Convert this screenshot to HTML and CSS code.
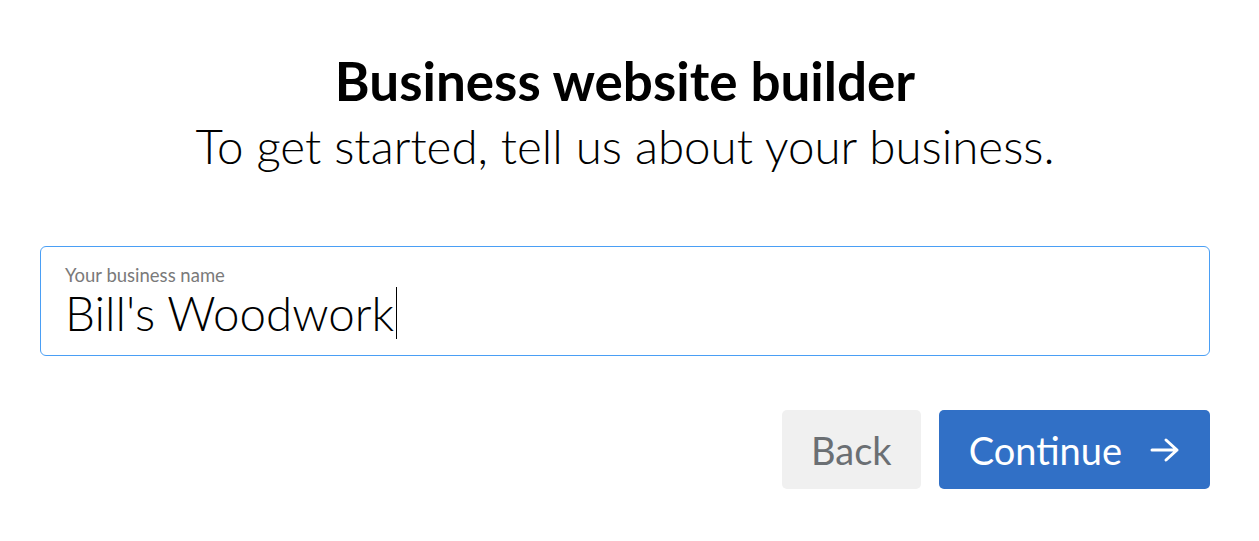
FILE: index.html
```html
<!DOCTYPE html>
<html lang="en">
<head>
    <meta charset="UTF-8">
    <meta name="viewport" content="width=device-width, initial-scale=1.0">
    <title>Business website builder</title>
    <link rel="stylesheet" href="styles.css">
</head>
<body>
    <div class="wizard">
        <h1>Business website builder</h1>
        <p class="lead">To get started, tell us about your business.</p>

        <div class="field">
            <label for="businessName">Your business name</label>
            <div class="value"><span id="businessName">Bill's Woodwork</span><span class="caret"></span></div>
        </div>

        <div class="actions">
            <button class="btn btn-back">Back</button>
            <button class="btn btn-continue">Continue
                <svg class="arrow" width="30" height="26" viewBox="0 0 30 26">
                    <path d="M2 13 H27 M16 3 L27 13 L16 23" fill="none" stroke="#fff" stroke-width="3" stroke-linecap="round" stroke-linejoin="round"/>
                </svg>
            </button>
        </div>
    </div>
</body>
</html>
```

FILE: styles.css
```css
/* General Styles */
body {
    margin: 0;
    font-family: 'Lato', 'Noto Sans', sans-serif;
    background: #fff;
    color: #000;
}
.wizard {
    padding: 48px 49px 0 40px;
}
h1 {
    margin: 0;
    text-align: center;
    font-size: 53px;
    font-weight: 700;
    line-height: 66px;
}
.lead {
    margin: 0;
    text-align: center;
    font-size: 47.5px;
    font-weight: 300;
    line-height: 64px;
}

/* Input field */
.field {
    margin-top: 68px;
    height: 110px;
    border: 1px solid #4a9ff5;
    border-radius: 6px;
    padding: 0 24px;
    box-sizing: border-box;
}
.field label {
    display: block;
    margin-top: 17px;
    font-size: 18.5px;
    font-weight: 400;
    color: #7a7a7a;
    line-height: 22px;
}
.value {
    display: flex;
    align-items: center;
    font-size: 47.5px;
    font-weight: 300;
    line-height: 54px;
}
.caret {
    display: inline-block;
    width: 1px;
    height: 52px;
    margin-left: 2px;
    background: #000;
}

/* Buttons */
.actions {
    display: flex;
    justify-content: flex-end;
    gap: 18px;
    margin-top: 54px;
}
.btn {
    height: 79px;
    border: none;
    border-radius: 5px;
    font-family: inherit;
    font-size: 38px;
    font-weight: 400;
    display: flex;
    align-items: center;
    cursor: pointer;
}
.btn-back {
    background: #f0f0f0;
    color: #6b6f73;
    padding: 0 29px;
}
.btn-continue {
    background: #3170c6;
    color: #fff;
    padding: 0 30px;
    gap: 28px;
}
```
